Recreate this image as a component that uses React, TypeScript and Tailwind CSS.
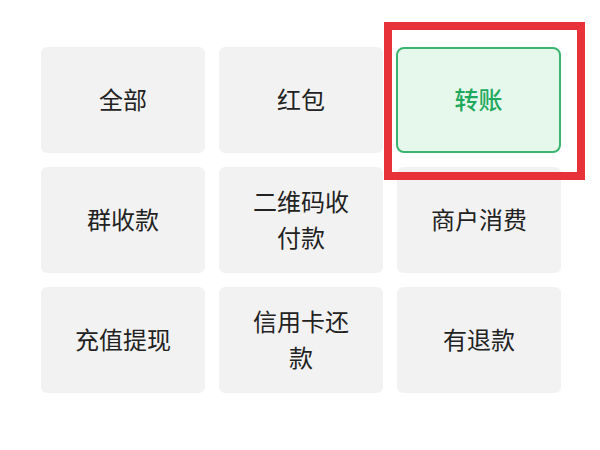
const items = [
  "全部",
  "红包",
  "转账",
  "群收款",
  "二维码收付款",
  "商户消费",
  "充值提现",
  "信用卡还款",
  "有退款",
];

export default function App() {
  const selected = "转账";

  return (
    <div
      className="relative h-[450px] w-[600px] bg-white"
      style={{ fontFamily: '"Noto Sans", "Noto Sans CJK SC", sans-serif' }}
    >
      <div className="grid grid-cols-[repeat(3,164px)] auto-rows-[106px] gap-x-[14px] gap-y-[14px] pl-[41px] pt-[47px]">
        {items.map((label) => (
          <div
            key={label}
            className={
              label === selected
                ? "-ml-px flex items-center justify-center rounded-[8px] border-2 border-[#3cb571] bg-[#e6f8ec] px-7 text-center text-[24px] font-medium leading-[36px] text-[#1fa95d]"
                : "flex items-center justify-center rounded-[6px] bg-[#f2f2f2] px-7 text-center text-[24px] leading-[36px] text-[#222222]"
            }
          >
            {label}
          </div>
        ))}
      </div>

      {/* highlight box drawn over the grid */}
      <div className="pointer-events-none absolute left-[384px] top-[22px] h-[158px] w-[201px] border-[8px] border-[#e8323a]" />
    </div>
  );
}
